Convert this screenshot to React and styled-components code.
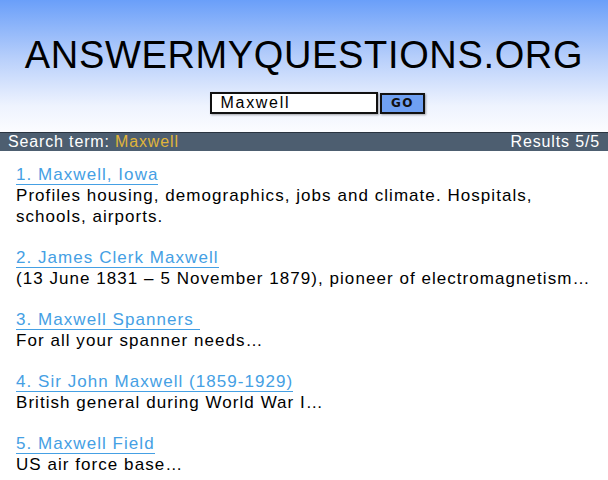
import React from "react";
import styled, { createGlobalStyle } from "styled-components";

const GlobalStyle = createGlobalStyle`
  html, body {
    margin: 0;
    padding: 0;
    background: #fff;
  }
  body {
    font-family: "Liberation Sans", Arial, sans-serif;
    color: #000;
  }
`;

const Header = styled.header`
  background: linear-gradient(to bottom, #6a9ff9 0%, #b9d0fb 45%, #eef3fe 80%, #fbfcff 100%);
  padding-top: 34px;
  height: 98px;
  display: flex;
  flex-direction: column;
  align-items: center;
`;

const Title = styled.h1`
  margin: 0;
  font-size: 38px;
  font-weight: normal;
  line-height: 42px;
  letter-spacing: 0.65px;
  color: #000;
`;

const SearchForm = styled.form`
  display: flex;
  align-items: center;
  gap: 2px;
  margin: 16px 0 0 26px;
`;

const SearchInput = styled.input`
  box-sizing: border-box;
  width: 168px;
  height: 22px;
  border: 2px solid #111;
  box-shadow: 1px 1px 2px rgba(0, 0, 0, 0.35);
  padding: 0 9px;
  font-family: "Liberation Sans", Arial, sans-serif;
  font-size: 16px;
  letter-spacing: 1.7px;
  color: #000;
  background: #fff;
  outline: none;
`;

const GoButton = styled.button`
  box-sizing: border-box;
  width: 45px;
  height: 21px;
  border: 2px solid #111;
  background: #6fa0f2;
  box-shadow: 1px 1px 2px rgba(0, 0, 0, 0.35);
  font-family: "DejaVu Sans", sans-serif;
  font-weight: bold;
  font-size: 12px;
  letter-spacing: 1.5px;
  color: #111;
  padding: 0 0 0 1px;
`;

const StatusBar = styled.div`
  display: flex;
  justify-content: space-between;
  align-items: center;
  height: 18px;
  padding: 0 8px;
  background: #4d5e70;
  border-top: 1px solid #2a3440;
  color: #fff;
  font-size: 16px;
  letter-spacing: 0.85px;
`;

const Term = styled.span`
  color: #e0b53a;
`;

const Results = styled.ol`
  list-style: none;
  margin: 0;
  padding: 13px 6px 0 16px;
  display: flex;
  flex-direction: column;
  gap: 20px;
`;

const Item = styled.li`
  font-size: 17px;
  line-height: 21px;
  letter-spacing: 1.05px;
`;

const ResultLink = styled.a`
  display: inline-block;
  color: #45a0e4;
  text-decoration: none;
  border-bottom: 1px solid #45a0e4;
  line-height: 19px;
  white-space: pre;
`;

const Desc = styled.div`
  color: #000;
`;

const results = [
  {
    title: "1. Maxwell, Iowa",
    desc: "Profiles housing, demographics, jobs and climate. Hospitals, schools, airports.",
  },
  {
    title: "2. James Clerk Maxwell",
    desc: "(13 June 1831 \u2013 5 November 1879), pioneer of electromagnetism\u2026",
  },
  { title: "3. Maxwell Spanners ", desc: "For all your spanner needs\u2026" },
  { title: "4. Sir John Maxwell (1859-1929)", desc: "British general during World War I\u2026" },
  { title: "5. Maxwell Field", desc: "US air force base\u2026" },
];

export default function App() {
  return (
    <>
      <GlobalStyle />
      <Header>
        <Title>ANSWERMYQUESTIONS.ORG</Title>
        <SearchForm onSubmit={(e) => e.preventDefault()}>
          <SearchInput defaultValue="Maxwell" />
          <GoButton type="submit">GO</GoButton>
        </SearchForm>
      </Header>
      <StatusBar>
        <span>
          Search term: <Term>Maxwell</Term>
        </span>
        <span>Results 5/5</span>
      </StatusBar>
      <Results>
        {results.map((r) => (
          <Item key={r.title}>
            <ResultLink href="#">{r.title}</ResultLink>
            <Desc>{r.desc}</Desc>
          </Item>
        ))}
      </Results>
    </>
  );
}
